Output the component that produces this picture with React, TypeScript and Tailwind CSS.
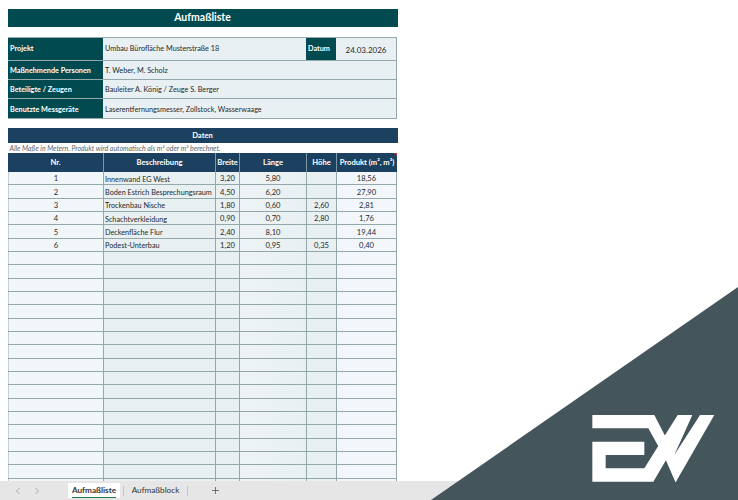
const teal = 'bg-[#004a50]';
const navy = 'bg-[#1c4160]';
const line = 'border-[#93a8ab]';

const info = [
  { label: 'Maßnehmende Personen', value: 'T. Weber, M. Scholz' },
  { label: 'Beteiligte / Zeugen', value: 'Bauleiter A. König / Zeuge S. Berger' },
  { label: 'Benutzte Messgeräte', value: 'Laserentfernungsmesser, Zollstock, Wasserwaage' },
];

const rows = [
  ['1', 'Innenwand EG West', '3,20', '5,80', '', '18,56'],
  ['2', 'Boden Estrich Besprechungsraum', '4,50', '6,20', '', '27,90'],
  ['3', 'Trockenbau Nische', '1,80', '0,60', '2,60', '2,81'],
  ['4', 'Schachtverkleidung', '0,90', '0,70', '2,80', '1,76'],
  ['5', 'Deckenfläche Flur', '2,40', '8,10', '', '19,44'],
  ['6', 'Podest-Unterbau', '1,20', '0,95', '0,35', '0,40'],
  ...Array.from({ length: 18 }, () => ['', '', '', '', '', '']),
];

const cols = 'grid grid-cols-[95px_112px_24px_67px_30px_61px]';

const Logo = () => (
  <svg viewBox="0 0 420 255" className="absolute left-[585px] top-[405px] w-[140px] h-[85px]" fill="#ffffff">
    <polygon points="22,30 208,30 290,190 272,232 240,160 190,70 22,70" />
    <polygon points="22,110 178,110 178,150 62,150 62,190 178,190 278,30 322,30 268,150 252,150 205,230 22,230" />
    <polygon points="272,232 250,180 268,150 345,30 388,30" />
  </svg>
);

export default function App() {
  return (
    <div className="relative w-[738px] h-[500px] overflow-hidden bg-white flex flex-col font-['Lato',sans-serif] text-[7.25px] text-[#1f2a2c]">
      <div className="flex-1 overflow-hidden pt-[9px] pl-[7.5px]">
        <div className={`${teal} w-[390px] h-[18px] flex items-center justify-center text-white font-bold text-[10.5px]`}>
          Aufmaßliste
        </div>

        <div className={`ml-[0.5px] mt-[10px] w-[389px] border-t border-r border-b ${line}`}>
          <div className={`flex h-[23px] border-b ${line}`}>
            <div className={`${teal} w-[95px] flex items-center pl-[2px] pt-[1px] text-white font-bold`}>Projekt</div>
            <div className="w-[203px] bg-[#e8f0f3] flex items-center pl-[2px] pt-[1px]">Umbau Bürofläche Musterstraße 18</div>
            <div className={`${teal} w-[30px] flex items-center pl-[2px] pt-[1px] text-white font-bold`}>Datum</div>
            <div className="flex-1 bg-[#e8f0f3] flex items-center justify-center pt-[1px] text-[8px]">24.03.2026</div>
          </div>
          {info.map((r, i) => (
            <div key={i} className={`flex h-[19px] ${i < 2 ? `border-b ${line}` : ''}`}>
              <div className={`${teal} w-[95px] flex items-center pl-[2px] pt-[3px] text-white font-bold`}>{r.label}</div>
              <div className="flex-1 bg-[#e8f0f3] flex items-center pl-[2px] pt-[3px]">{r.value}</div>
            </div>
          ))}
        </div>

        <div className={`${navy} mt-[9px] w-[390px] h-[15px] flex items-center justify-center text-white font-bold text-[7.6px]`}>Daten</div>
        <div className="h-[10px] pl-[2px] flex items-center text-[6.95px] italic text-[#5c6769]">
          Alle Maße in Metern. Produkt wird automatisch als m² oder m³ berechnet.
        </div>

        <div className="ml-[0.5px] w-[389px]">
          <div className={`${cols} ${navy} h-[19px] relative text-white font-bold text-[7.6px]`}>
            {['Nr.', 'Beschreibung', 'Breite', 'Länge', 'Höhe', 'Produkt (m², m³)'].map((h, i) => (
              <div key={i} className={`flex items-center justify-center pt-[1px] whitespace-nowrap ${i ? 'border-l border-[#7d97a3]' : ''}`}>{h}</div>
            ))}
            <div className="absolute right-0 top-0 w-0 h-0 border-l-[3px] border-t-[3px] border-l-transparent border-t-[#c8323c]" />
          </div>
          {rows.map((r, i) => (
            <div key={i} className={`${cols} h-[13.33px] border-b ${line} text-[7.6px] leading-none`}>
              <div className="bg-[#f1f6f9] border-l border-[#c3d0d4] flex items-center justify-center pt-[2px]">{r[0]}</div>
              <div className={`bg-[#e8f0f2] border-l ${line} flex items-center pl-[1px] pt-[2px] whitespace-nowrap text-[7.25px]`}>{r[1]}</div>
              <div className={`bg-[#e8f0f2] border-l ${line} flex items-center justify-center pt-[2px]`}>{r[2]}</div>
              <div className={`bg-gradient-to-r from-[#eef4f6] to-[#e9f0f2] border-l ${line} flex items-center justify-center pt-[2px]`}>{r[3]}</div>
              <div className={`bg-[#e8f0f2] border-l ${line} flex items-center justify-center pt-[2px]`}>{r[4]}</div>
              <div className={`bg-[#f3f7fb] border-l border-r ${line} flex items-center justify-center pt-[2px]`}>{r[5]}</div>
            </div>
          ))}
        </div>
      </div>

      <div className="h-[19px] bg-[#e6e6e6] flex items-center text-[8.2px] text-[#333]">
        <span className="w-[68px] flex pl-[15px] gap-[13px]">
          <svg width="6" height="8" viewBox="0 0 6 8" fill="none" stroke="#9a9a9a" strokeWidth="0.8"><path d="M4.5 1L1.5 4l3 3" /></svg>
          <svg width="6" height="8" viewBox="0 0 6 8" fill="none" stroke="#9a9a9a" strokeWidth="0.8"><path d="M1.5 1l3 3-3 3" /></svg>
        </span>
        <div className="w-[52px] h-[15px] bg-white flex items-center justify-center font-bold relative">
          Aufmaßliste
          <div className="absolute bottom-[0.5px] left-[4px] right-[4px] h-[1px] bg-[#1f7a4d]" />
        </div>
        <div className="ml-[3px] w-px h-[10px] bg-[#c8c8c8]" />
        <div className="w-[63px] text-center">Aufmaßblock</div>
        <div className="w-px h-[10px] bg-[#c8c8c8]" />
        <svg className="ml-[24px]" width="7" height="7" viewBox="0 0 7 7" stroke="#555" strokeWidth="0.8"><path d="M3.5 0v7M0 3.5h7" /></svg>
      </div>

      <div className="absolute left-[431px] top-[287px] w-[307px] h-[213px] bg-[#44555c] [clip-path:polygon(100%_0,100%_100%,0_100%)]" />
      <Logo />
    </div>
  );
}
